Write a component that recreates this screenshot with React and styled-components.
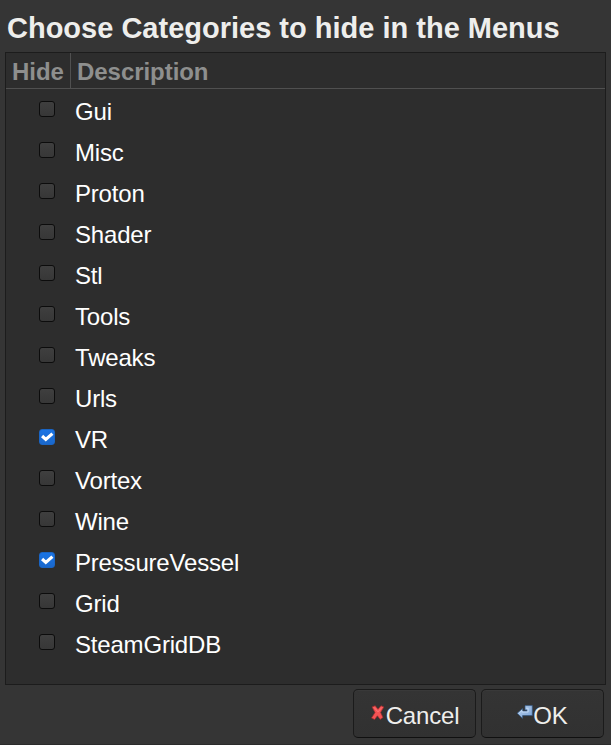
import React, { useState } from "react";
import styled, { createGlobalStyle } from "styled-components";

const GlobalStyle = createGlobalStyle`
  * { box-sizing: border-box; }
  html, body { margin: 0; background: #353535; }
  body { font-family: "Liberation Sans", Arial, sans-serif; overflow: hidden; }
`;

const Dialog = styled.div`
  width: 611px;
  height: 745px;
  display: flex;
  flex-direction: column;
  background: #353535;
  border-bottom: 1px solid #2b2b2b;
  padding: 0 5px;
`;

const Title = styled.h1`
  flex: none;
  margin: 0;
  height: 52px;
  padding: 4px 0 0 2px;
  line-height: 48px;
  font-size: 29px;
  font-weight: 700;
  color: #eeeeec;
  white-space: nowrap;
`;

const Panel = styled.div`
  flex: none;
  height: 633px;
  border: 1px solid #1c1c1c;
  background: #2d2d2d;
`;

const HeaderRow = styled.div`
  display: flex;
  height: 36px;
  border-bottom: 1px solid #505050;
`;

const HeaderCell = styled.div`
  width: ${(p) => p.$width};
  padding: 1px 0 0 6px;
  line-height: 35px;
  font-size: 24px;
  font-weight: 700;
  color: #8e8f8e;
  letter-spacing: -0.05px;
  border-right: ${(p) => (p.$divided ? "1px solid #505050" : "none")};
`;

const Row = styled.label`
  display: flex;
  align-items: center;
  height: 41px;
  padding-left: 33px;
`;

const HiddenInput = styled.input`
  appearance: none;
  width: 0;
  height: 0;
  margin: 0;
`;

const Box = styled.span`
  flex: none;
  width: 16px;
  height: 16px;
  margin-bottom: 1px;
  border-radius: 3px;
  border: 1px solid ${(p) => (p.$on ? "#1a65c4" : "#0c0c0c")};
  background: ${(p) => (p.$on ? "linear-gradient(#1a74e4, #1a68cc)" : "linear-gradient(#3f3f3f, #373737)")};
  svg { display: block; }
`;

const RowLabel = styled.span`
  margin-left: 20px;
  padding-top: 5px;
  line-height: 36px;
  font-size: 24px;
  letter-spacing: -0.19px;
  color: #ffffff;
`;

const Actions = styled.div`
  display: flex;
  justify-content: flex-end;
  gap: 5px;
  padding: 4px 2px 0 0;
`;

const Button = styled.button`
  display: flex;
  align-items: center;
  justify-content: center;
  width: 123px;
  height: 49px;
  padding: 0;
  border: 1px solid #1b1b1b;
  border-bottom-color: #101010;
  border-radius: 5px;
  background: linear-gradient(#343434, #313131);
  box-shadow: inset 0 1px #393939;
  color: #eeeeec;
  font: 24px/36px "Liberation Sans", Arial, sans-serif;
  letter-spacing: -0.19px;
  svg { flex: none; margin-top: -2px; }
`;

const ButtonText = styled.span`
  padding-top: 5px;
`;

const Check = () => (
  <svg width="14" height="14" viewBox="0 0 14 14">
    <path d="M2.1 6 L5.8 9.5 L12.4 3.6" fill="none" stroke="#fff" strokeWidth="3.1" />
  </svg>
);

const CancelIcon = () => (
  <svg width="16" height="16" viewBox="0 0 16 16">
    <path d="M2 1.9 L5.2 .7 L8 4.2 L11 .7 L13.9 2 L10.6 7.4 L13 12.4 L10.2 14.4 L7.4 10.8 L4.6 14.6 L1.5 12.9 L5 7.5 Z" fill="#f45354" stroke="#9c2c2c" strokeWidth=".7" strokeLinejoin="round" />
    <path d="M4 2.4 L8 6.8 L12 2.4" fill="none" stroke="#ff8080" strokeWidth=".8" />
  </svg>
);

const OkIcon = () => (
  <svg width="16" height="16" viewBox="0 0 16 16">
    <defs>
      <linearGradient id="arrow" x1="0" y1="0" x2="1" y2="1">
        <stop offset="0" stopColor="#bad3f0" />
        <stop offset="1" stopColor="#7aa2d6" />
      </linearGradient>
    </defs>
    <path d="M.2 8.3 L5.6 3.4 V6 H9.9 V4.9 H8 V.6 H15.3 V10.6 H5.6 V13.4 Z" fill="url(#arrow)" stroke="#31557e" strokeWidth=".7" strokeLinejoin="round" />
    <path d="M2.2 8 L5 5.5 V7.1 H11.2 V3.3 H9.2" fill="none" stroke="#c9def5" strokeWidth=".8" />
  </svg>
);

const CATEGORIES = ["Gui", "Misc", "Proton", "Shader", "Stl", "Tools", "Tweaks", "Urls", "VR", "Vortex", "Wine", "PressureVessel", "Grid", "SteamGridDB"];

export default function App() {
  const [hidden, setHidden] = useState(["VR", "PressureVessel"]);
  const toggle = (name) =>
    setHidden((h) => (h.includes(name) ? h.filter((n) => n !== name) : [...h, name]));

  return (
    <>
      <GlobalStyle />
      <Dialog>
        <Title>Choose Categories to hide in the Menus</Title>
        <Panel>
          <HeaderRow>
            <HeaderCell $width="65px" $divided>Hide</HeaderCell>
            <HeaderCell $width="534px">Description</HeaderCell>
          </HeaderRow>
          {CATEGORIES.map((name) => {
            const on = hidden.includes(name);
            return (
              <Row key={name}>
                <HiddenInput type="checkbox" checked={on} onChange={() => toggle(name)} />
                <Box $on={on}>{on && <Check />}</Box>
                <RowLabel>{name}</RowLabel>
              </Row>
            );
          })}
        </Panel>
        <Actions>
          <Button><CancelIcon /><ButtonText>Cancel</ButtonText></Button>
          <Button><OkIcon /><ButtonText>OK</ButtonText></Button>
        </Actions>
      </Dialog>
    </>
  );
}
